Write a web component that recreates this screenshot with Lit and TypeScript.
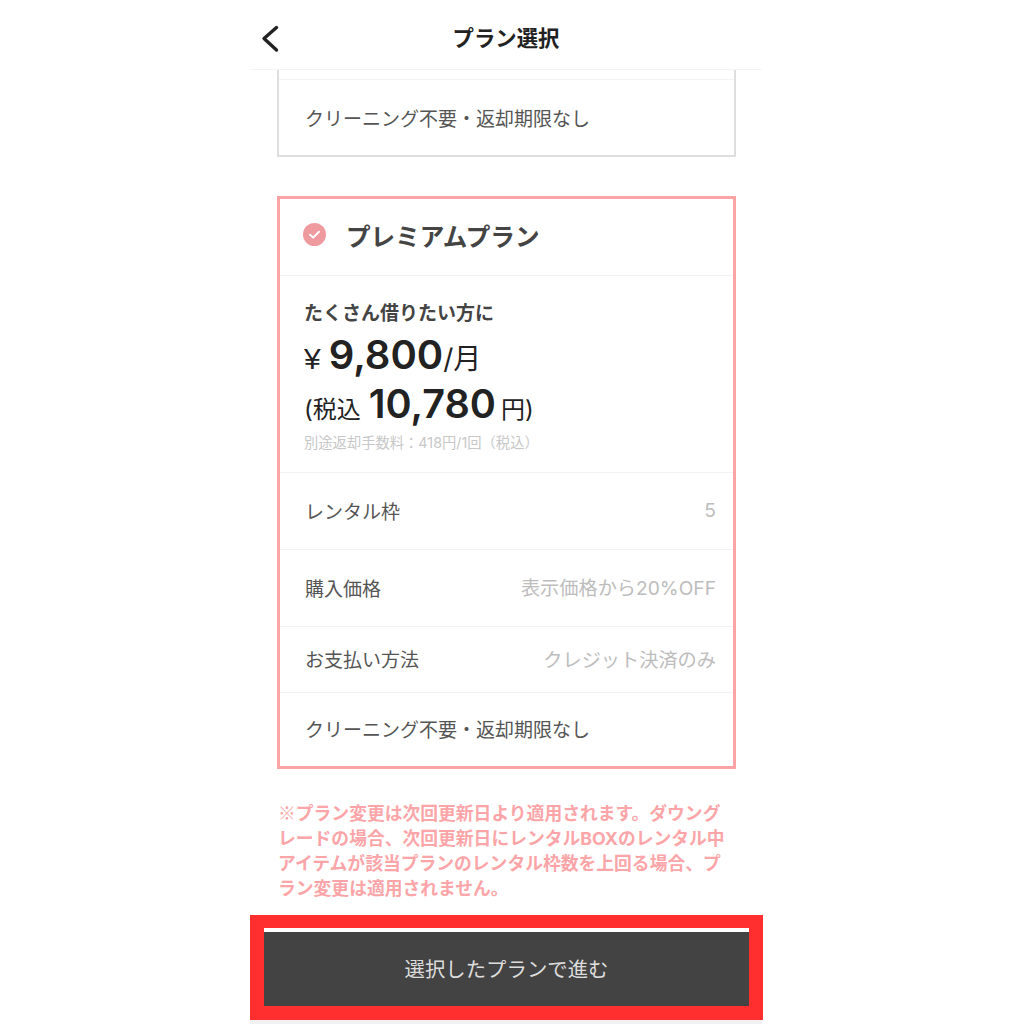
import { LitElement, html, css } from "lit";
import { customElement } from "lit/decorators.js";

@customElement("app-root")
export class AppRoot extends LitElement {
  static styles = css`
    :host {
      display: block;
      width: 1024px;
      height: 1024px;
      overflow: hidden;
      background: #fff;
      font-family: "Inter", "Noto Sans CJK JP", sans-serif;
      color: #444;
    }
    .phone {
      width: 512px;
      height: 1024px;
      margin-left: 250px;
      display: flex;
      flex-direction: column;
    }
    .nav {
      height: 70px;
      flex: none;
      box-sizing: border-box;
      border-bottom: 1px solid #f3f3f3;
      position: relative;
      display: flex;
      align-items: center;
      justify-content: center;
      padding-top: 9px;
    }
    .nav h1 {
      margin: 0;
      font-size: 21.4px;
      font-weight: 700;
      color: #222;
      line-height: 1;
    }
    .back {
      position: absolute;
      left: 11px;
      top: 24px;
      width: 20px;
      height: 30px;
    }
    .content {
      flex: 1;
      padding: 0 26px 0 27px;
      display: flex;
      flex-direction: column;
    }
    .card {
      box-sizing: border-box;
      background: #fff;
    }
    .prev {
      height: 87px;
      border: 2px solid #dedede;
      border-top: 0;
      padding-top: 9px;
      margin-bottom: -1px;
    }
    .prev .row {
      height: 76px;
      padding: 0 17px 0 26px;
    }
    .selected {
      margin-top: 40px;
      height: 573px;
      border: 3px solid #fba3a5;
    }
    .head {
      height: 76px;
      display: flex;
      align-items: center;
      gap: 20px;
      padding: 0 0 5px 23px;
      box-sizing: border-box;
      font-size: 24.6px;
      font-weight: 700;
      color: #444;
    }
    .tick {
      width: 23px;
      height: 23px;
      flex: none;
    }
    .info {
      border-top: 1px solid #f3f3f3;
      height: 197px;
      box-sizing: border-box;
      padding: 27px 0 0 24px;
    }
    .lead {
      font-size: 19px;
      font-weight: 700;
      line-height: 22px;
      color: #444;
    }
    .price {
      display: flex;
      align-items: baseline;
      color: #222;
      white-space: pre;
      line-height: 50px;
    }
    .p1 {
      margin-top: 5px;
      height: 49px;
      font-size: 28px;
    }
    .p2 {
      height: 50px;
      font-size: 24px;
    }
    .yen {
      font-size: 30px;
      font-family: "Liberation Sans", sans-serif;
    }
    .p1 b {
      font-size: 40px;
      font-weight: 600;
      margin: 0 0 0 8px;
    }
    .p2 b {
      font-size: 39.6px;
      font-weight: 600;
      margin: 0 5px 0 8px;
    }
    .fee {
      margin-top: 5px;
      font-size: 14.3px;
      line-height: 18px;
      color: #c8c8c8;
    }
    .row {
      display: flex;
      align-items: center;
      justify-content: space-between;
      box-sizing: border-box;
      border-top: 1px solid #f3f3f3;
      padding: 0 17px 2px 25px;
      font-size: 19px;
      color: #555;
    }
    .row span:last-child:not(:first-child) {
      color: #bdbdbd;
      font-size: 19.2px;
    }
    .r1 { height: 77px; }
    .r2 { height: 77px; }
    .r3 { height: 66px; }
    .r4 { height: 74px; }
    .note {
      margin: 31px 0 0 1px;
      font-size: 17.8px;
      font-weight: 700;
      line-height: 25px;
      color: #fba5a8;
      white-space: nowrap;
    }
    .mark {
      font-family: "Noto Sans CJK JP", sans-serif;
    }
    .cta {
      width: 513px;
      height: 105px;
      box-sizing: border-box;
      border: 14px solid #ff2f2f;
      border-top-width: 13px;
      background: #fff;
      padding-top: 4px;
      flex: none;
    }
    .cta div {
      height: 74px;
      box-sizing: border-box;
      padding-bottom: 2px;
      background: #434343;
      color: #ddd;
      font-size: 20.4px;
      display: flex;
      align-items: center;
      justify-content: center;
    }
    .foot {
      height: 4px;
      background: #f1f1f1;
      flex: none;
    }
  `;

  render() {
    return html`
      <div class="phone">
        <header class="nav">
          <svg class="back" viewBox="0 0 20 30" fill="none" stroke="#222" stroke-width="3.4" stroke-linecap="round" stroke-linejoin="round">
            <path d="M15.5 3.5 L3 14.5 L15.5 26"></path>
          </svg>
          <h1>プラン選択</h1>
        </header>
        <div class="content">
          <section class="card prev">
            <div class="row">クリーニング不要・返却期限なし</div>
          </section>
          <section class="card selected">
            <div class="head">
              <svg class="tick" viewBox="0 0 23 23">
                <circle cx="11.5" cy="11.5" r="11.5" fill="#ee9a9e"></circle>
                <path d="M7 11.8 L10.2 14.6 L16 8.8" fill="none" stroke="#fff" stroke-width="2" stroke-linecap="round" stroke-linejoin="round"></path>
              </svg>
              <span>プレミアムプラン</span>
            </div>
            <div class="info">
              <div class="lead">たくさん借りたい方に</div>
              <div class="price p1"><span class="yen">¥</span><b>9,800</b>/月</div>
              <div class="price p2">(税込<b>10,780</b>円)</div>
              <div class="fee">別途返却手数料：418円/1回（税込）</div>
            </div>
            <div class="row r1"><span>レンタル枠</span><span>5</span></div>
            <div class="row r2"><span>購入価格</span><span>表示価格から20%OFF</span></div>
            <div class="row r3"><span>お支払い方法</span><span>クレジット決済のみ</span></div>
            <div class="row r4"><span>クリーニング不要・返却期限なし</span></div>
          </section>
          <p class="note"><span class="mark">※</span>プラン変更は次回更新日より適用されます。ダウング<br />レードの場合、次回更新日にレンタルBOXのレンタル中<br />アイテムが該当プランのレンタル枠数を上回る場合、プ<br />ラン変更は適用されません。</p>
        </div>
        <div class="cta"><div>選択したプランで進む</div></div>
        <div class="foot"></div>
      </div>
    `;
  }
}
